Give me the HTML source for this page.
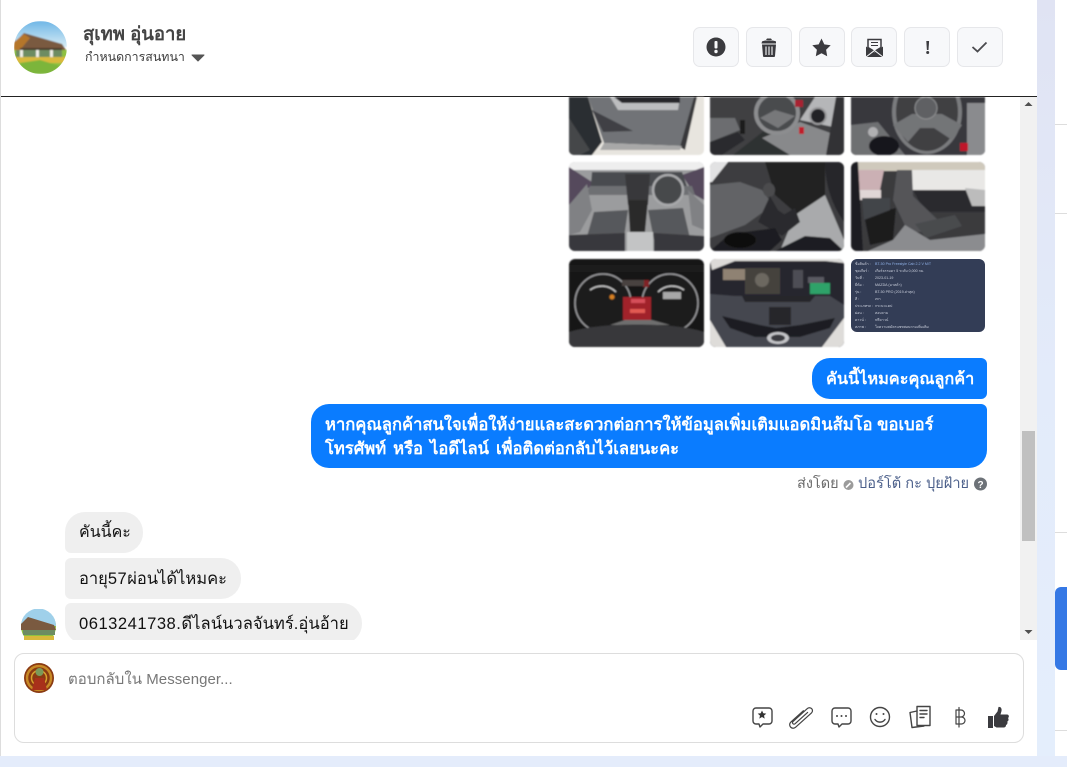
<!DOCTYPE html>
<html lang="th"><head><meta charset="utf-8"><title>Messenger</title>
<style>
html,body{margin:0;padding:0;width:1067px;height:767px;overflow:hidden;background:#e4ecfb;font-family:"Liberation Sans","Noto Sans CJK SC",sans-serif}
.a{position:absolute;white-space:nowrap}
.main{left:0;top:0;width:1037px;height:756px;background:#fff;border-left:1px solid #ddd;box-sizing:border-box}
.strip{left:1037px;top:0;width:18px;height:756px;background:linear-gradient(#e0e3f3,#e3ebfa 50%,#e4eefc)}
.side{left:1055px;top:0;width:12px;height:756px;background:#fff}
.hl{left:1055px;width:12px;height:1px;background:#ddd}
.btn{top:27px;width:46px;height:40px;box-sizing:border-box;background:#f7f8fa;border:1px solid #e6e7ea;border-radius:7px}
.bub{font-size:16px;line-height:24px;box-sizing:border-box}
.r{background:#0a7cff;color:#fff;font-weight:700;padding:9px 13px 8px 14px}
.l{background:#efefef;color:#111;padding:9px 14px 8px 14px}
.n{letter-spacing:.5px}
</style></head><body>
<div class="a main"></div><div class="a strip"></div><div class="a side"></div>
<div class="a hl" style="top:124px"></div><div class="a hl" style="top:213px"></div><div class="a hl" style="top:532px"></div><div class="a hl" style="top:730px"></div>
<div class="a" style="left:1055px;top:587px;width:12px;height:83px;background:#3578e5;border-radius:6px 0 0 6px"></div>

<div class="a" style="left:83px;top:23px;font-size:18.5px;line-height:22px;font-weight:700;color:#444">สุเทพ อุ่นอาย</div>
<div class="a" style="left:85px;top:49px;font-size:12.4px;line-height:16px;color:#3c3c3c">กำหนดการสนทนา</div>
<div class="a" style="left:1px;top:96px;width:1036px;height:1px;background:#222"></div>
<div class="a btn" style="left:693px"></div><div class="a btn" style="left:746px"></div><div class="a btn" style="left:799px"></div><div class="a btn" style="left:851px"></div><div class="a btn" style="left:904px"></div><div class="a btn" style="left:957px"></div>

<div class="a" style="left:1020px;top:97px;width:17px;height:543px;background:#f1f1f1"></div>
<div class="a" style="left:1022px;top:431px;width:13px;height:110px;background:#c0c0c0"></div>

<div class="a bub r" style="left:812px;top:358px;width:175px;height:41px;border-radius:18px 6px 6px 18px;font-size:16.3px">คันนี้ไหมคะคุณลูกค้า</div>
<div class="a bub r" style="left:311px;top:404px;width:676px;height:64px;border-radius:18px 6px 18px 18px;font-size:16.6px">หากคุณลูกค้าสนใจเพื่อให้ง่ายและสะดวกต่อการให้ข้อมูลเพิ่มเติมแอดมินส้มโอ ขอเบอร์<br><span style="word-spacing:2.4px">โทรศัพท์ หรือ ไอดีไลน์ เพื่อติดต่อกลับไว้เลยนะคะ</span></div>
<div class="a" style="left:797px;top:476px;font-size:14.5px;line-height:17px;color:#6a6a6a">ส่งโดย</div>
<div class="a" style="left:858px;top:476px;font-size:14.6px;line-height:17px;color:#4b5f8a">ปอร์โต้ กะ ปุยฝ้าย</div>

<div class="a bub l" style="left:65px;top:512px;width:78px;height:41px;border-radius:20px 20px 20px 6px">คันนี้คะ</div>
<div class="a bub l" style="left:65px;top:558px;width:176px;height:41px;border-radius:6px 20px 20px 6px;font-size:16.5px">อายุ<span class="n">57</span>ผ่อนได้ไหมคะ</div>
<div class="a" style="left:65px;top:603px;width:297px;height:37px;overflow:hidden"><div class="bub l" style="width:297px;height:41px;border-radius:6px 20px 20px 20px;white-space:nowrap;font-size:16.6px"><span class="n">0613241738.</span>ดีไลน์นวลจันทร์.อุ่นอ้าย</div></div>

<div class="a" style="left:14px;top:653px;width:1010px;height:90px;box-sizing:border-box;border:1px solid #ddd;border-radius:10px;background:#fff"></div>
<div class="a" style="left:68px;top:671px;font-size:15px;line-height:17px;color:#777;letter-spacing:.05px">ตอบกลับใน Messenger...</div>

<svg class="a" style="left:0;top:0" width="1067" height="767" viewBox="0 0 1067 767">
<defs>
<filter id="b" x="-5%" y="-5%" width="110%" height="110%"><feGaussianBlur stdDeviation=".8"/></filter>
<clipPath id="c1"><path d="M569 97H704V150a5 5 0 0 1-5 5H574a5 5 0 0 1-5-5Z"/></clipPath>
<clipPath id="c2"><path d="M710 97H844V150a5 5 0 0 1-5 5H715a5 5 0 0 1-5-5Z"/></clipPath>
<clipPath id="c3"><path d="M851 97H985V150a5 5 0 0 1-5 5H856a5 5 0 0 1-5-5Z"/></clipPath>
<clipPath id="c4"><rect x="569" y="162" width="135" height="89" rx="6"/></clipPath>
<clipPath id="c5"><rect x="710" y="162" width="134" height="89" rx="6"/></clipPath>
<clipPath id="c6"><rect x="851" y="162" width="134" height="89" rx="6"/></clipPath>
<clipPath id="c7"><rect x="569" y="259" width="135" height="88" rx="6"/></clipPath>
<clipPath id="c8"><rect x="710" y="259" width="134" height="88" rx="6"/></clipPath>
<clipPath id="av1"><circle cx="40.5" cy="47.5" r="26.5"/></clipPath>
<clipPath id="av2"><path d="M21 609H56V640H21Z"/></clipPath>
<linearGradient id="sky" x1="0" y1="0" x2="0" y2="1"><stop offset="0" stop-color="#6fb6e6"/><stop offset="1" stop-color="#d6ecf5"/></linearGradient>
</defs>

<g filter="url(#b)">
<g clip-path="url(#c1)">
<rect x="569" y="97" width="135" height="58" fill="#e8e5df"/>
<path d="M569 97H588L602 142 592 155H569Z" fill="#2c2d30"/>
<path d="M569 118 590 150 580 155H569Z" fill="#454649"/>
<path d="M588 97H694L682 146 604 143Z" fill="#717377"/>
<path d="M610 97H680L678 110 618 110Z" fill="#bcbdbf"/>
<path d="M614 97H680V103H622Z" fill="#27282b"/>
<path d="M592 110 633 131 603 132Z" fill="#3f4044"/>
<path d="M694 97H697L685 150 680 147Z" fill="#38373a"/>
<path d="M604 143 682 146 680 150 600 150Z" fill="#a8a8a8"/>
</g>
<g clip-path="url(#c2)">
<rect x="710" y="97" width="134" height="58" fill="#3f4043"/>
<path d="M710 118H735L740 130 710 142Z" fill="#6c6d70"/>
<path d="M710 142 738 132 745 140 722 155H710Z" fill="#2b2c2e"/>
<path d="M733 155 765 130 800 125 825 155Z" fill="#2f3032"/>
<path d="M762 138 800 122 836 135 836 155H790Z" fill="#88898b"/>
<path d="M800 120 838 128 838 97H815Z" fill="#b5b6b8"/>
<ellipse cx="777" cy="113" rx="21" ry="20" fill="#4a4b4e" stroke="#8c8d8f" stroke-width="4"/>
<path d="M760 118 775 110 795 116 778 128Z" fill="#77787a"/>
<circle cx="818" cy="116" r="8" fill="#232325" stroke="#9a9a9c" stroke-width="2"/>
<rect x="795" y="100" width="8" height="7" fill="#a82030"/><rect x="799" y="127" width="5" height="7" fill="#c01c2c"/>
<path d="M836 97H844V155H826Z" fill="#333336"/>
<rect x="740" y="120" width="5" height="14" fill="#1c1c1e"/>
</g>
<g clip-path="url(#c3)">
<rect x="851" y="97" width="134" height="58" fill="#38393c"/>
<ellipse cx="927" cy="112" rx="35" ry="42" fill="#7a7b7e"/>
<ellipse cx="927" cy="112" rx="31" ry="39" fill="#3f4043"/>
<path d="M893 125 912 114 942 114 962 125 952 140 934 128 920 128 908 142Z" fill="#737477"/>
<ellipse cx="926" cy="108" rx="11" ry="11" fill="#5f6063" stroke="#8f9092"/>
<path d="M851 155V125L878 122 905 155Z" fill="#6e6f72"/>
<ellipse cx="884" cy="146" rx="15" ry="10" fill="#17171a"/>
<circle cx="873" cy="132" r="5" fill="#b0b0b2"/>
<rect x="967" y="103" width="18" height="52" fill="#8a8b8e"/>
<rect x="960" y="143" width="8" height="8" fill="#c0182c"/>
</g>
<g clip-path="url(#c4)">
<rect x="569" y="162" width="135" height="89" fill="#9b9c9e"/>
<rect x="569" y="162" width="135" height="8" fill="#eeeeee"/>
<path d="M569 167 595 184 585 190 569 205Z" fill="#55495c"/>
<path d="M704 167 682 175 695 195 704 200Z" fill="#55495c"/>
<path d="M592 172H682L690 195H590Z" fill="#4a4b4f"/>
<path d="M590 186H692L695 195H585Z" fill="#6e6f73"/>
<path d="M625 174H650L648 205H628Z" fill="#37383b"/>
<path d="M569 205 587 184 592 210 580 232 569 235Z" fill="#808184"/>
<path d="M704 205 688 190 692 225 704 230Z" fill="#808184"/>
<circle cx="668" cy="190" r="15" fill="#47484b" stroke="#a8a9ab" stroke-width="2.500"/>
<path d="M594 212 628 210 624 238 586 240Z" fill="#57585b"/>
<path d="M648 210 683 208 690 238 654 240Z" fill="#57585b"/>
<path d="M628 200H648L645 232H630Z" fill="#2a2a2c"/>
<rect x="627" y="232" width="26" height="19" fill="#c3c4c5"/>
<path d="M569 235 625 233V251H569Z" fill="#38393c"/>
<path d="M654 233 704 236V251H654Z" fill="#38393c"/>
</g>
<g clip-path="url(#c5)">
<rect x="710" y="162" width="134" height="89" fill="#3c3d40"/>
<path d="M710 162H728L712 182H710Z" fill="#e2e2e3"/>
<path d="M710 185 740 182 762 190 773 205 745 225 710 238Z" fill="#626366"/>
<path d="M765 162H825V205L798 215 775 195Z" fill="#212224"/>
<path d="M795 215 825 195 844 240V251H780Z" fill="#a9aaac"/>
<path d="M766 225 795 208 800 222 782 236Z" fill="#2a2b2d"/>
<ellipse cx="769" cy="190" rx="6" ry="7" fill="#4b4c4e"/>
<path d="M758 222 770 196 778 210 790 218 772 230Z" fill="#2c2c2f"/>
<path d="M710 251 725 238 745 232 775 228 782 240 770 251Z" fill="#1e1e20"/>
<ellipse cx="740" cy="240" rx="16" ry="8" fill="#0f0f11"/>
<path d="M775 251 805 236 830 238 844 251Z" fill="#1f1f21"/>
<path d="M825 162H844V222C832 205 825 185 825 162Z" fill="#262629"/>
</g>
<g clip-path="url(#c6)">
<rect x="851" y="162" width="134" height="89" fill="#3a3b3e"/>
<rect x="851" y="162" width="134" height="9" fill="#cfc9bc"/>
<path d="M857 170H884L880 190H857Z" fill="#cbb0b4"/>
<rect x="857" y="190" width="24" height="10" fill="#e0d6d6"/>
<path d="M905 170H985V190H905Z" fill="#e9e8e6"/>
<path d="M913 190H970L985 200V212H925Z" fill="#2b2c2f"/>
<path d="M965 188 985 190V206H972Z" fill="#bcbcbc"/>
<path d="M851 162H858L863 251H851Z" fill="#1d1d20"/>
<path d="M897 170H912L913 196 940 222 945 232H908L893 200Z" fill="#545559"/>
<path d="M864 215 896 208 893 240 870 245Z" fill="#1c1c1f"/>
<path d="M862 198H890V210L864 220Z" fill="#434448"/>
<path d="M915 224 955 215 962 226 926 238Z" fill="#4a4b4e"/>
<path d="M893 240 905 225 930 240 985 234V251H868Z" fill="#8b8c8f"/>
</g>
<g clip-path="url(#c7)">
<rect x="569" y="259" width="135" height="88" fill="#121214"/>
<path d="M569 272H704V265H569Z" fill="#1c1c1e"/>
<ellipse cx="603" cy="303" rx="28" ry="29" fill="#1a1a1c" stroke="#9a9a9c" stroke-width="1.500"/>
<ellipse cx="670" cy="303" rx="28" ry="29" fill="#1a1a1c" stroke="#9a9a9c" stroke-width="1.500"/>
<path d="M590 290a20 20 0 0 1 26 2M684 290a20 20 0 0 0-26 2" fill="none" stroke="#c8c8c8" stroke-width="1.500"/>
<rect x="623" y="297" width="28" height="23" fill="#a12129"/>
<rect x="631" y="299" width="14" height="4" fill="#d6505a"/><rect x="630" y="309" width="15" height="4" fill="#e35a52"/>
<circle cx="612" cy="297" r="2.500" fill="#d68020"/><rect x="643" y="280" width="6" height="7" fill="#802028"/>
<rect x="622" y="280" width="22" height="6" fill="#4a4340"/>
<rect x="663" y="292" width="18" height="7" fill="#a8a8a8"/>
<path d="M625 320H652L670 325H610Z" fill="#6e6e6e"/>
<path d="M569 347V332C600 322 675 322 704 332V347Z" fill="#38393b"/>
</g>
<g clip-path="url(#c8)">
<rect x="710" y="259" width="134" height="88" fill="#26252d"/>
<path d="M710 259H844L844 263 825 261H735L712 270Z" fill="#dcdad8"/>
<rect x="723" y="269" width="22" height="11" fill="#8f8273"/>
<rect x="745" y="268" width="35" height="26" fill="#45423d"/><circle cx="762" cy="280" r="7" fill="#6c6860"/>
<rect x="793" y="270" width="10" height="18" fill="#4e4d54"/>
<rect x="810" y="283" width="20" height="11" fill="#2fa269"/><rect x="808" y="277" width="16" height="6" fill="#5a5a62"/>
<path d="M710 294 735 296H830L844 305V347H710Z" fill="#45474f"/>
<path d="M742 296H815L810 302H745Z" fill="#26272b"/>
<rect x="769" y="307" width="22" height="18" fill="#25262b"/>
<path d="M722 316 760 325 776 328 800 325 835 318 830 328 800 337H755L730 328Z" fill="#1e1f24"/>
<ellipse cx="778" cy="338" rx="11" ry="6" fill="#c4c5c8"/><ellipse cx="778" cy="338" rx="7" ry="3.500" fill="#3a3b40"/>
<path d="M710 320 726 347H710Z" fill="#dedcd9"/><path d="M844 318 822 347H844Z" fill="#dedcd9"/>
</g>
</g>
<rect x="851" y="259" width="134" height="73" rx="6" fill="#333d56"/>
<g font-family="Liberation Sans,sans-serif" font-size="3.6" fill="#c9cedb">
<text x="855" y="265">ชื่อสินค้า :</text><text x="875" y="265" fill="#8fb0e6">BT-50 Pro Freestyle Cab 2.2 V M/T</text>
<text x="855" y="272">ชุดเกียร์ :</text><text x="875" y="272">เกียร์ธรรมดา 5 ระดับ 0,000 กม.</text>
<text x="855" y="279">วันที่ :</text><text x="875" y="279">2023-01-19</text>
<text x="855" y="286">ยี่ห้อ :</text><text x="875" y="286">MAZDA (มาสด้า)</text>
<text x="855" y="293">รุ่น :</text><text x="875" y="293">BT-50 PRO (2019-ล่าสุด)</text>
<text x="855" y="300">สี :</text><text x="875" y="300">เทา</text>
<text x="855" y="307">ประเภทรถ :</text><text x="875" y="307">กระบะแคป</text>
<text x="855" y="314">ผ่อน :</text><text x="875" y="314">สอบถาม</text>
<text x="855" y="321">ดาวน์ :</text><text x="875" y="321">ฟรีดาวน์</text>
<text x="855" y="328">สภาพ :</text><text x="875" y="328">ใจความสมัครแชทสอบถามเพิ่มเติม</text>
</g>

<g clip-path="url(#av1)" filter="url(#b)">
<rect x="14" y="21" width="53" height="26" fill="url(#sky)"/><rect x="14" y="50" width="53" height="24" fill="#8fc13f"/>
<path d="M14 43 24 33 62 44 66 50H14Z" fill="#7a5a40"/><path d="M14 42 24 34 30 38 20 50H14Z" fill="#b5762c"/>
<path d="M20 48H62V50H20Z" fill="#4a3a2a"/><path d="M16 50h46v7H16Z" fill="#6d8c62"/><path d="M20 50h3v7h-3ZM36 50h3v7h-3ZM50 50h3v7h-3Z" fill="#f0f0e8"/>
<path d="M14 57H67V63H14Z" fill="#d8b93c"/><path d="M20 63 40 60 60 66 50 74H25Z" fill="#7cb53a"/>
</g>
<g clip-path="url(#av2)">
<circle cx="38.5" cy="626.5" r="17.5" fill="#8fc13f"/><path d="M21 626a17.500 17.500 0 0 1 35 0Z" fill="#9fd0ea"/><path d="M21 624 28 617 54 625 56 630H21Z" fill="#7a5a40"/><path d="M23 630H55V635H23Z" fill="#6d8c62"/><path d="M24 636H54V640H24Z" fill="#d8b93c"/>
</g>
<circle cx="39" cy="678" r="15" fill="#8a3a12"/><circle cx="39" cy="678" r="12" fill="none" stroke="#c88a26" stroke-width="2.500"/><circle cx="39" cy="678" r="7.500" fill="none" stroke="#d8a02c" stroke-width="1.500"/><circle cx="39.500" cy="672" r="4" fill="#7b9a5a"/><path d="M35 678h9l3 12H32Z" fill="#a8301a"/>

<path d="M192 55h12l-6 6Z" fill="#555" stroke="#555" stroke-linejoin="round"/>

<!-- header icons -->
<circle cx="716" cy="47" r="9.500" fill="#3b3b3f"/><rect x="714.500" y="41" width="3" height="7.500" rx="1" fill="#f7f8fa"/><circle cx="716" cy="51.500" r="1.700" fill="#f7f8fa"/>
<path d="M762 41.500c2-1.500 12-1.500 14 0v2h-14.500ZM766 40l1-1.500h4l1 1.500" fill="#3b3b3f"/><path d="M762 44.500h14l-1 11.500a1 1 0 0 1-1 1h-10a1 1 0 0 1-1-1Z" fill="#3b3b3f"/><path d="M766 46.500v8.500M769 46.500v8.500M772 46.500v8.500" stroke="#f7f8fa" stroke-width="1.100"/>
<path d="M821.500 38.500l2.800 5.900 6.400.9-4.600 4.500 1.100 6.400-5.700-3-5.700 3 1.100-6.400-4.600-4.500 6.400-.9Z" fill="#3b3b3f"/>
<path d="M868 47.500V39.500h13v8l-6.500 4Z" fill="#f7f8fa" stroke="#3b3b3f" stroke-width="1.500"/><path d="M871 42.500h7M871 45.500h7" stroke="#3b3b3f" stroke-width="1.100"/><path d="M866 46.500l8.500 6 8.500-6v10.500h-17Z" fill="#3b3b3f"/><path d="M866 57l8.500-6.500 8.500 6.500" fill="none" stroke="#f7f8fa" stroke-width="1.100"/>
<path d="M926.300 41h2.800l-.6 9h-1.600Z" fill="#3b3b3f"/><circle cx="927.700" cy="52.500" r="1.500" fill="#3b3b3f"/>
<path d="M972.500 47l5 4.500 9-9" fill="none" stroke="#4a4a4e" stroke-width="1.800"/>

<!-- scroll arrows -->
<path d="M1028.500 102l4 4h-8Z" fill="#505050"/><path d="M1024.500 630h8l-4 4Z" fill="#505050"/>

<!-- sent by icons -->
<circle cx="848.500" cy="485" r="5" fill="#9b9b9b"/><path d="M846 487.500l4.500-4.500" stroke="#fff" stroke-width="1.600"/>
<circle cx="980.500" cy="484" r="6.500" fill="#6d7278"/><text x="980.500" y="488" font-family="Liberation Sans,sans-serif" font-size="10" font-weight="700" text-anchor="middle" fill="#fff">?</text>

<!-- composer icons -->
<g fill="none" stroke="#444" stroke-width="1.400" stroke-linejoin="round" stroke-linecap="round">
<path d="M756 708h13a3 3 0 0 1 3 3v10a3 3 0 0 1-3 3h-6l-3 3-1-3h-3a3 3 0 0 1-3-3v-10a3 3 0 0 1 3-3Z"/>
<path transform="rotate(48 801 717)" d="M798 711v17a3.500 3.500 0 0 0 7 0V706.500a3 3 0 0 0-6 0V726a1.500 1.500 0 0 0 3 0V709" stroke-width="1.200"/>
<path d="M835 708h13a3 3 0 0 1 3 3v10a3 3 0 0 1-3 3h-6l-3 3-1-3h-3a3 3 0 0 1-3-3v-10a3 3 0 0 1 3-3Z"/>
<circle cx="880" cy="717" r="9.500"/><path d="M875 719.500c2.500 3.500 7.500 3.500 10 0"/>
<path d="M917 706.500h13v19h-13Z" fill="#fff"/><path d="M917 711l-7 1.500 2 15 12-1.500"/><path d="M920 710.500h7M920 714h7M920 717.500h4"/>
<path d="M956 710h5a3.500 3.500 0 0 1 0 7h-5M956 717h5.500a3.500 3.500 0 0 1 0 7H956V710M959 707.500V727" stroke-width="1.200"/>
</g>
<path d="M762 710.500l1.300 2.800 3 .3-2.300 2 .7 3-2.700-1.600-2.700 1.600.7-3-2.300-2 3-.3Z" fill="#333"/>
<circle cx="837" cy="716" r="1" fill="#444"/><circle cx="841.500" cy="716" r="1" fill="#444"/><circle cx="846" cy="716" r="1" fill="#444"/>
<circle cx="876.500" cy="714" r="1" fill="#444"/><circle cx="883.500" cy="714" r="1" fill="#444"/>
<path d="M988 716h5v12h-5ZM994 716l3.500-4.500 1-4.500c2.500-.500 3.500 2 3 4l-1 3.500h6.500c2 0 2.500 2.500 1 3.500 1 1.500.5 3-.7 3.500.5 1.500 0 3-1.300 3.500 0 1.800-1 2.500-2.500 2.500h-7l-2.500-1.500Z" fill="#3b3b3f"/>
</svg>
</body></html>
